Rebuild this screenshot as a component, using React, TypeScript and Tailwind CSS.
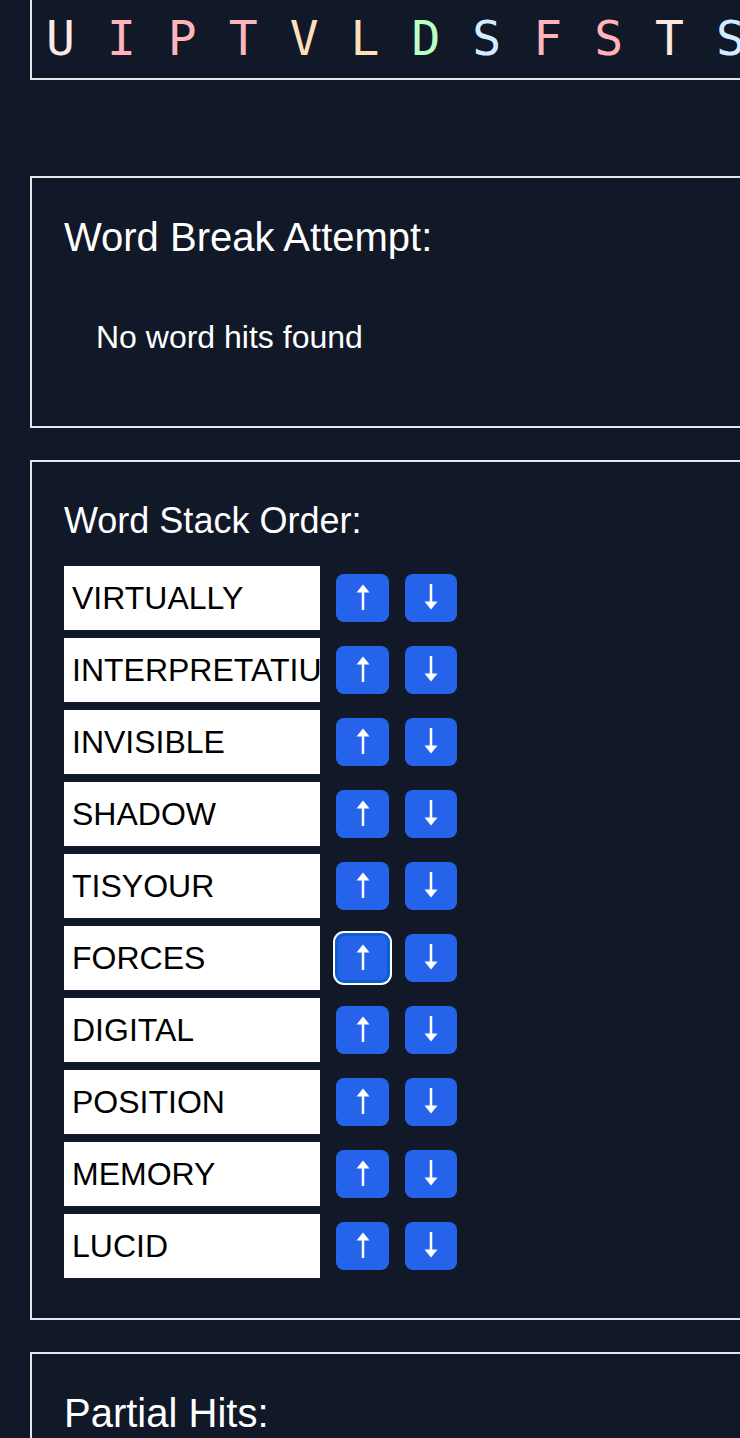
const letters = [
  { ch: "U", color: "text-[#fde9e2]" },
  { ch: "I", color: "text-[#ffb3ba]" },
  { ch: "P", color: "text-[#ffb3ba]" },
  { ch: "T", color: "text-[#ffb3ba]" },
  { ch: "V", color: "text-[#ffdfba]" },
  { ch: "L", color: "text-[#ffdfba]" },
  { ch: "D", color: "text-[#baffc9]" },
  { ch: "S", color: "text-[#d4ecff]" },
  { ch: "F", color: "text-[#ffb3ba]" },
  { ch: "S", color: "text-[#ffb3ba]" },
  { ch: "T", color: "text-[#fde9e2]" },
  { ch: "S", color: "text-[#d4ecff]" },
];

const words = [
  "VIRTUALLY",
  "INTERPRETATIUN",
  "INVISIBLE",
  "SHADOW",
  "TISYOUR",
  "FORCES",
  "DIGITAL",
  "POSITION",
  "MEMORY",
  "LUCID",
];

function Arrow({ down }: { down?: boolean }) {
  return (
    <svg
      width="16"
      height="26"
      viewBox="0 0 16 26"
      className={`-mt-[3px] ${down ? "rotate-180" : ""}`}
      fill="white"
    >
      <rect x="6.75" y="6" width="2.5" height="20" />
      <polygon points="1.5,8.5 8,0.5 14.5,8.5" />
    </svg>
  );
}

export default function App() {
  return (
    <div className="min-h-screen bg-[#111827] overflow-hidden font-['Liberation_Sans',Arial,sans-serif] text-white">
      <div className="ml-[30px] w-[1000px] flex flex-col">
        {/* Letter strip (top scrolled off) */}
        <div className="border-2 border-t-0 border-[#e5e7eb] pl-[14px] pt-[10px] pb-[12px]">
          <div className="flex gap-8 font-['DejaVu_Sans_Mono',monospace] text-[48px] leading-[56px]">
            {letters.map((l, i) => (
              <span key={i} className={l.color}>
                {l.ch}
              </span>
            ))}
          </div>
        </div>

        {/* Word break */}
        <div className="mt-24 border-2 border-[#e5e7eb] px-8 pt-8 pb-[65px]">
          <h2 className="text-[40px] leading-[54px]">Word Break Attempt:</h2>
          <p className="mt-[49px] ml-8 text-[32px] leading-[48px]">No word hits found</p>
        </div>

        {/* Word stack */}
        <div className="mt-8 border-2 border-[#e5e7eb] px-8 pt-8 pb-10">
          <h2 className="text-[36px] leading-[54px]">Word Stack Order:</h2>
          <div className="mt-[18px] flex flex-col gap-2">
            {words.map((w, i) => (
              <div key={i} className="flex items-center gap-4">
                <input
                  readOnly
                  value={w}
                  className="w-[256px] h-16 bg-white text-black pl-2 text-[32px] outline-none"
                />
                <button
                  className={`w-[53px] h-12 rounded-lg bg-[#2563eb] flex items-center justify-center ${
                    i === 5
                      ? "shadow-[inset_0_0_0_2px_#0b5fd0,0_0_0_1px_#0b5fd0,0_0_0_3px_#ffffff]"
                      : ""
                  }`}
                >
                  <Arrow />
                </button>
                <button className="w-[52px] h-12 rounded-lg bg-[#2563eb] flex items-center justify-center">
                  <Arrow down />
                </button>
              </div>
            ))}
          </div>
        </div>

        {/* Partial hits */}
        <div className="mt-8 border-2 border-[#e5e7eb] px-8 pt-8 pb-10">
          <h2 className="text-[40px] leading-[54px]">Partial Hits:</h2>
        </div>
      </div>
    </div>
  );
}
